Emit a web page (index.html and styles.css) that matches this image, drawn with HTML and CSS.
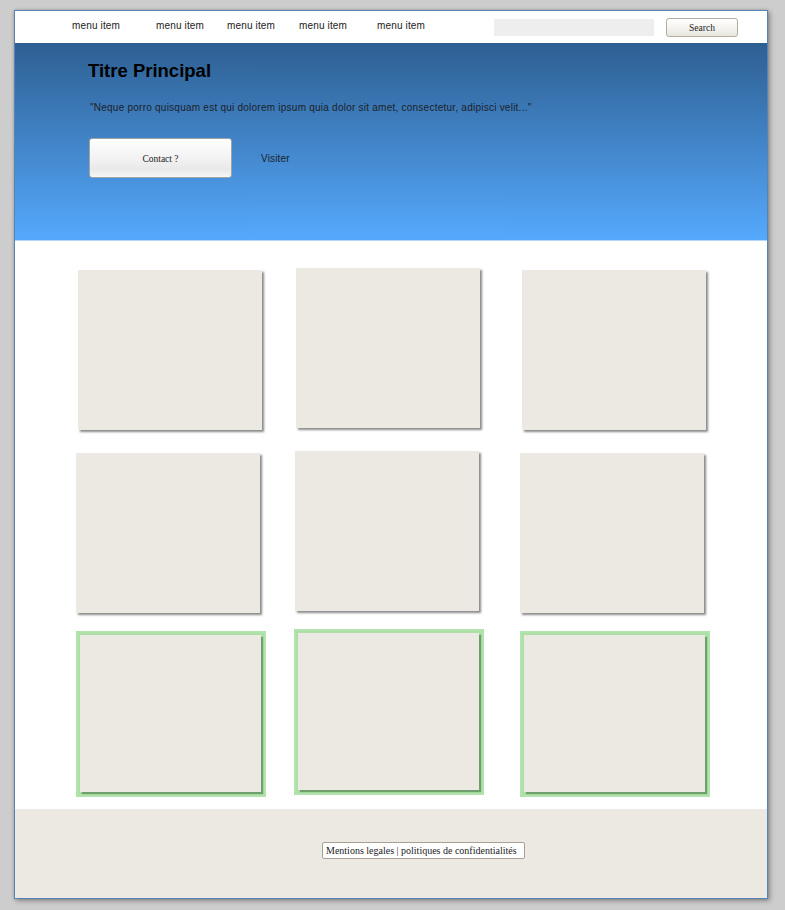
FILE: index.html
```html
<!DOCTYPE html>
<html lang="fr">
<head>
<meta charset="utf-8">
<title>Maquette</title>
<link rel="stylesheet" href="styles.css">
</head>
<body>
<div class="frame">
  <header class="nav">
    <ul class="menu">
      <li>menu item</li>
      <li>menu item</li>
      <li>menu item</li>
      <li>menu item</li>
      <li>menu item</li>
    </ul>
    <form class="search">
      <input class="search-input" type="text">
      <button class="search-btn" type="button">Search</button>
    </form>
  </header>

  <section class="hero">
    <h1 class="title">Titre Principal</h1>
    <p class="quote">"Neque porro quisquam est qui dolorem ipsum quia dolor sit amet, consectetur, adipisci velit..."</p>
    <div class="actions">
      <button class="contact-btn" type="button">Contact ?</button>
      <span class="visit">Visiter</span>
    </div>
  </section>

  <main class="content">
    <div class="row row-1">
      <div class="card side"></div>
      <div class="card"></div>
      <div class="card side"></div>
    </div>
    <div class="row row-2">
      <div class="card side"></div>
      <div class="card"></div>
      <div class="card side"></div>
    </div>
    <div class="row row-3">
      <div class="green side"><div class="card card-in"></div></div>
      <div class="green"><div class="card card-in"></div></div>
      <div class="green side"><div class="card card-in"></div></div>
    </div>
  </main>

  <footer class="footer">
    <span class="legal">Mentions legales | politiques de confidentialités</span>
  </footer>
</div>
</body>
</html>
```

FILE: styles.css
```css
html, body {
  margin: 0;
  padding: 0;
}
body {
  background: #cdcdcd;
  width: 785px;
  height: 910px;
  padding: 10px 0 0 14px;
  box-sizing: border-box;
  font-family: "Liberation Sans", Arial, sans-serif;
}
.frame {
  width: 754px;
  height: 889px;
  box-sizing: border-box;
  border: 1px solid #5684b3;
  background: #fff;
  display: flex;
  flex-direction: column;
  box-shadow: 0 0 3px rgba(0,0,0,0.2), 2px 2px 5px rgba(0,0,0,0.3);
}

/* NAV */
.nav {
  height: 32px;
  flex: none;
  display: flex;
  align-items: flex-start;
  background: #fff;
}
.menu {
  list-style: none;
  margin: 0;
  padding: 0 0 0 57px;
  display: grid;
  grid-template-columns: 84px 71px 72px 78px 60px;
  height: 28px;
  align-items: center;
}
.menu li {
  font-size: 10px;
  letter-spacing: 0.15px;
  color: #222;
  white-space: nowrap;
}
.search {
  margin: 0 0 0 57px;
  display: flex;
  align-items: flex-start;
  padding-top: 7px;
}
.search-input {
  width: 160px;
  height: 17px;
  margin: 1px 0 0 0;
  padding: 0;
  border: none;
  background: #eeeeee;
  box-sizing: border-box;
}
.search-btn {
  margin-left: 12px;
  width: 72px;
  height: 19px;
  box-sizing: border-box;
  border: 1px solid #b4ac9f;
  border-radius: 3px;
  background: linear-gradient(#ffffff, #f3f2ee 60%, #e9e6df);
  font-family: "Liberation Serif", "Times New Roman", serif;
  font-size: 9.5px;
  color: #222;
  padding: 0;
}

/* HERO */
.hero {
  height: 180px;
  flex: none;
  background: linear-gradient(#2e5f92, #55a9fd);
  border-bottom: 1px solid #b2d6fc;
  padding: 17px 0 0 73px;
}
.title {
  margin: 0;
  font-size: 18.5px;
  line-height: 22px;
  font-weight: bold;
  color: #000;
}
.quote {
  margin: 20px 0 0 2px;
  font-size: 10px;
  line-height: 12px;
  letter-spacing: 0.24px;
  color: #1b1f2a;
}
.actions {
  margin-top: 24px;
  display: flex;
  align-items: center;
  padding-left: 1px;
}
.contact-btn {
  width: 143px;
  height: 40px;
  box-sizing: border-box;
  border: 1px solid #a3a3a3;
  border-radius: 3px;
  background: linear-gradient(#ffffff, #f1f1f1 55%, #e9e9e9 80%, #f7f7f7);
  font-family: "Liberation Serif", "Times New Roman", serif;
  font-size: 9.5px;
  color: #222;
  padding: 2px 0 0 0;
}
.visit {
  margin-left: 29px;
  font-size: 10px;
  letter-spacing: 0.15px;
  color: #1b1f2a;
}

/* CONTENT */
.content {
  flex: none;
  height: 568px;
  box-sizing: border-box;
  padding-top: 27px;
  display: flex;
  flex-direction: column;
}
.row {
  display: grid;
  grid-template-columns: 218px 226px 190px;
  align-items: start;
}
.row-1 {
  padding-left: 63px;
  margin-bottom: 21px;
}
.row-2 {
  grid-template-columns: 219px 225px 190px;
  padding-left: 61px;
  margin-bottom: 16px;
}
.row-3 {
  padding-left: 61px;
}
.card {
  width: 184px;
  height: 160px;
  background: #ece9e2;
  box-shadow: 2px 2px 2px rgba(60,60,60,0.6);
}
.side {
  margin-top: 2px;
}
.green {
  width: 190px;
  height: 166px;
  box-sizing: border-box;
  padding: 4px;
  background: #ade0a7;
  box-shadow: inset 0 0 0 2px #b2e3ac;
}
.card-in {
  width: 181px;
  height: 157px;
  box-shadow: 2px 2px 1px #6f9f6d;
}

/* FOOTER */
.footer {
  flex: 1;
  background: #ece9e2;
  padding: 31px 0 0 307px;
  box-sizing: border-box;
}
.legal {
  display: inline-block;
  width: 203px;
  height: 17px;
  box-sizing: border-box;
  border: 1px solid #a8a097;
  border-radius: 2px;
  background: #fff;
  padding: 0 0 0 3px;
  font-family: "Liberation Serif", "Times New Roman", serif;
  font-size: 10px;
  line-height: 15px;
  color: #222;
  white-space: nowrap;
}
```
